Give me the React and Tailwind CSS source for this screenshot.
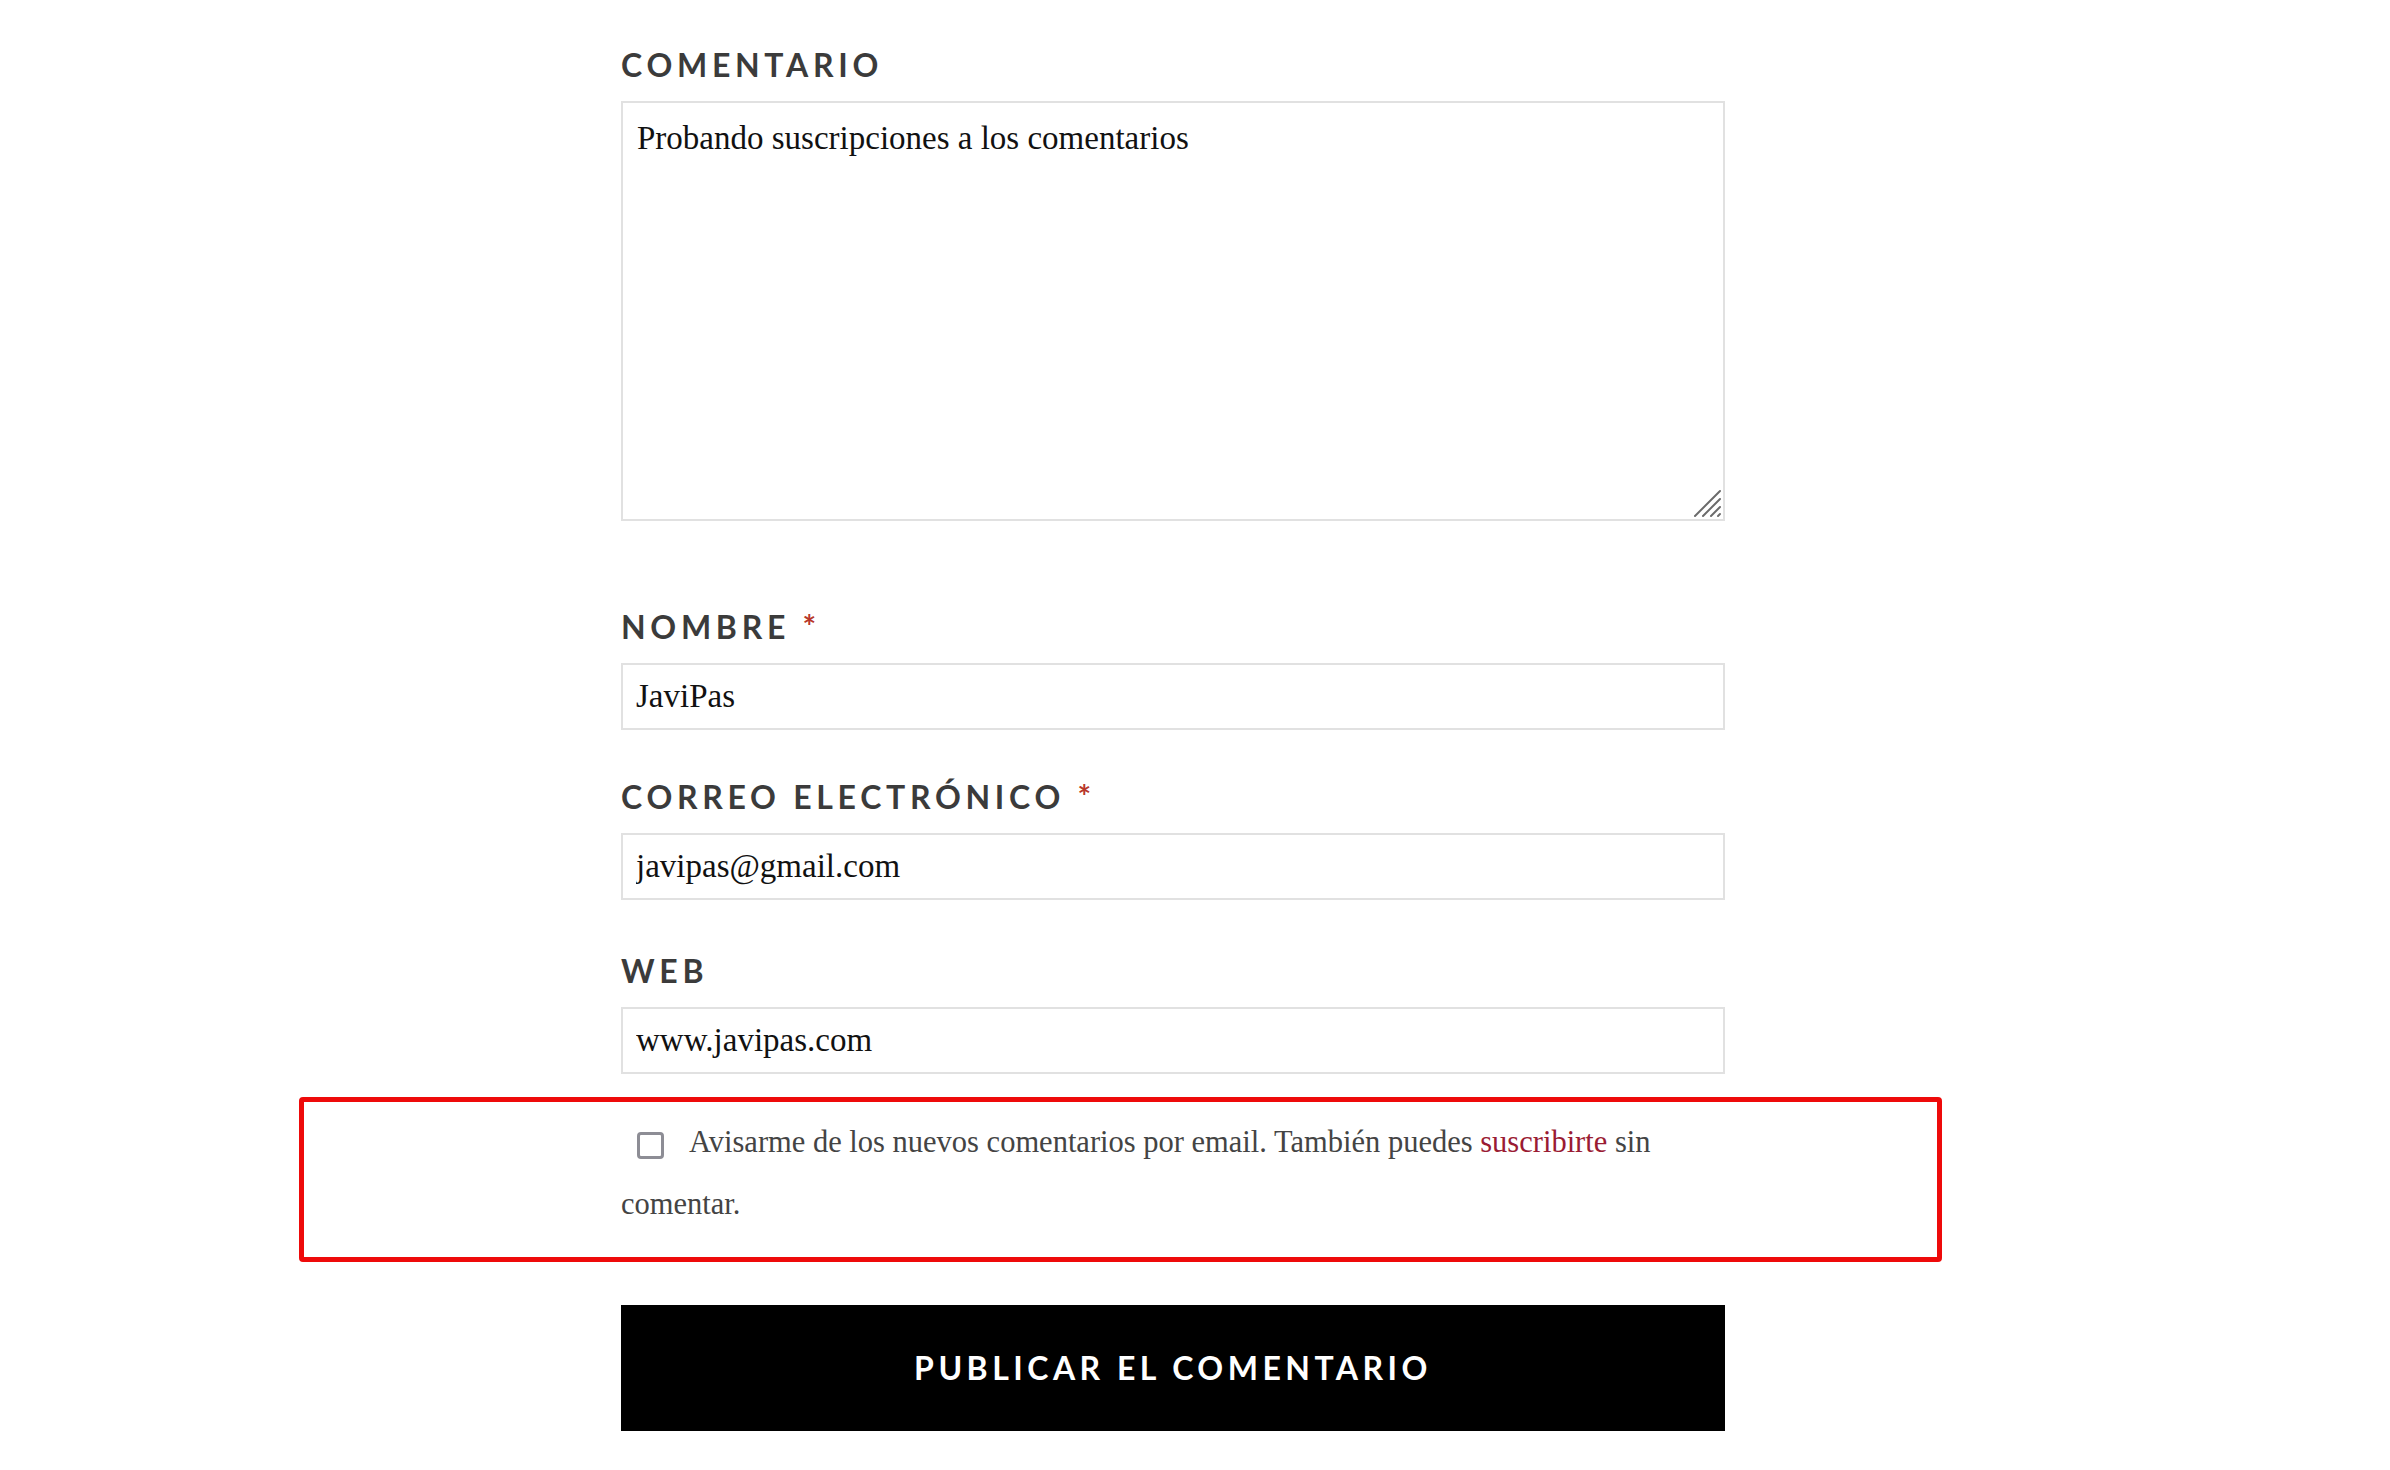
import React from 'react';

const labelCls =
    "block pt-[2px] mb-[17px] font-['Lato',sans-serif] font-bold text-[32px] leading-[38px] tracking-[0.147em] text-[#3b3b3b]";
const inputCls =
    "block w-full h-[67px] border-2 border-[#e1e1e1] bg-white px-[13px] font-['Liberation_Serif',serif] text-[33px] text-[#111] outline-none";

const Required = () => <span className="text-[#b8372b]">*</span>;

// diagonal grip drawn over the textarea corner
const ResizeGrip = () => (
    <svg
        className="pointer-events-none absolute right-[3px] bottom-[3px] w-[30px] h-[30px]"
        viewBox="0 0 30 30"
        fill="none"
        stroke="#6b6b6b"
        strokeWidth="2"
        strokeLinecap="round"
    >
        <path d="M3 28 L28 3" />
        <path d="M11 28 L28 11" />
        <path d="M19 28 L28 19" />
        <path d="M26 28 L28 26" />
    </svg>
);

export default function App() {
    return (
        <div className="min-h-screen bg-white pt-[44px]">
            <form className="ml-[621px] w-[1104px]" onSubmit={(e) => e.preventDefault()}>
                <div>
                    <label className={labelCls}>COMENTARIO</label>
                    <div className="relative">
                        <textarea
                            className="block w-full h-[420px] resize-none border-2 border-[#e1e1e1] bg-white px-[14px] pt-[11px] font-['Liberation_Serif',serif] text-[33px] leading-[48px] text-[#111] outline-none"
                            defaultValue="Probando suscripciones a los comentarios"
                        />
                        <ResizeGrip />
                    </div>
                </div>

                <div className="mt-[85px]">
                    <label className={labelCls}>
                        NOMBRE <Required />
                    </label>
                    <input className={inputCls} type="text" defaultValue="JaviPas" />
                </div>

                <div className="mt-[46px]">
                    <label className={labelCls}>
                        CORREO ELECTRÓNICO <Required />
                    </label>
                    <input className={inputCls} type="email" defaultValue="javipas@gmail.com" />
                </div>

                <div className="mt-[50px]">
                    <label className={labelCls}>WEB</label>
                    <input className={inputCls} type="text" defaultValue="www.javipas.com" />
                </div>

                <div className="relative mt-[37px]">
                    <p className="font-['Liberation_Serif',serif] text-[30.5px] leading-[62px] text-[#444]">
                        <span className="inline-block w-[27px] h-[27px] ml-[16px] mr-[25px] border-[3px] border-[#8d8d95] rounded-[4px] align-middle" />
                        Avisarme de los nuevos comentarios por email. También puedes{' '}
                        <a href="#" className="text-[#9a1b33]">suscribirte</a> sin comentar.
                    </p>
                    {/* annotation frame */}
                    <div className="pointer-events-none absolute left-[-322px] right-[-217px] top-[-14px] bottom-[-27px] border-[5px] border-[#ee0a0a] rounded-[4px]" />
                </div>

                <button
                    type="submit"
                    className="mt-[70px] block w-full h-[126px] bg-black font-['Lato',sans-serif] font-bold text-[32px] tracking-[0.14em] text-white"
                >
                    PUBLICAR EL COMENTARIO
                </button>
            </form>
        </div>
    );
}
